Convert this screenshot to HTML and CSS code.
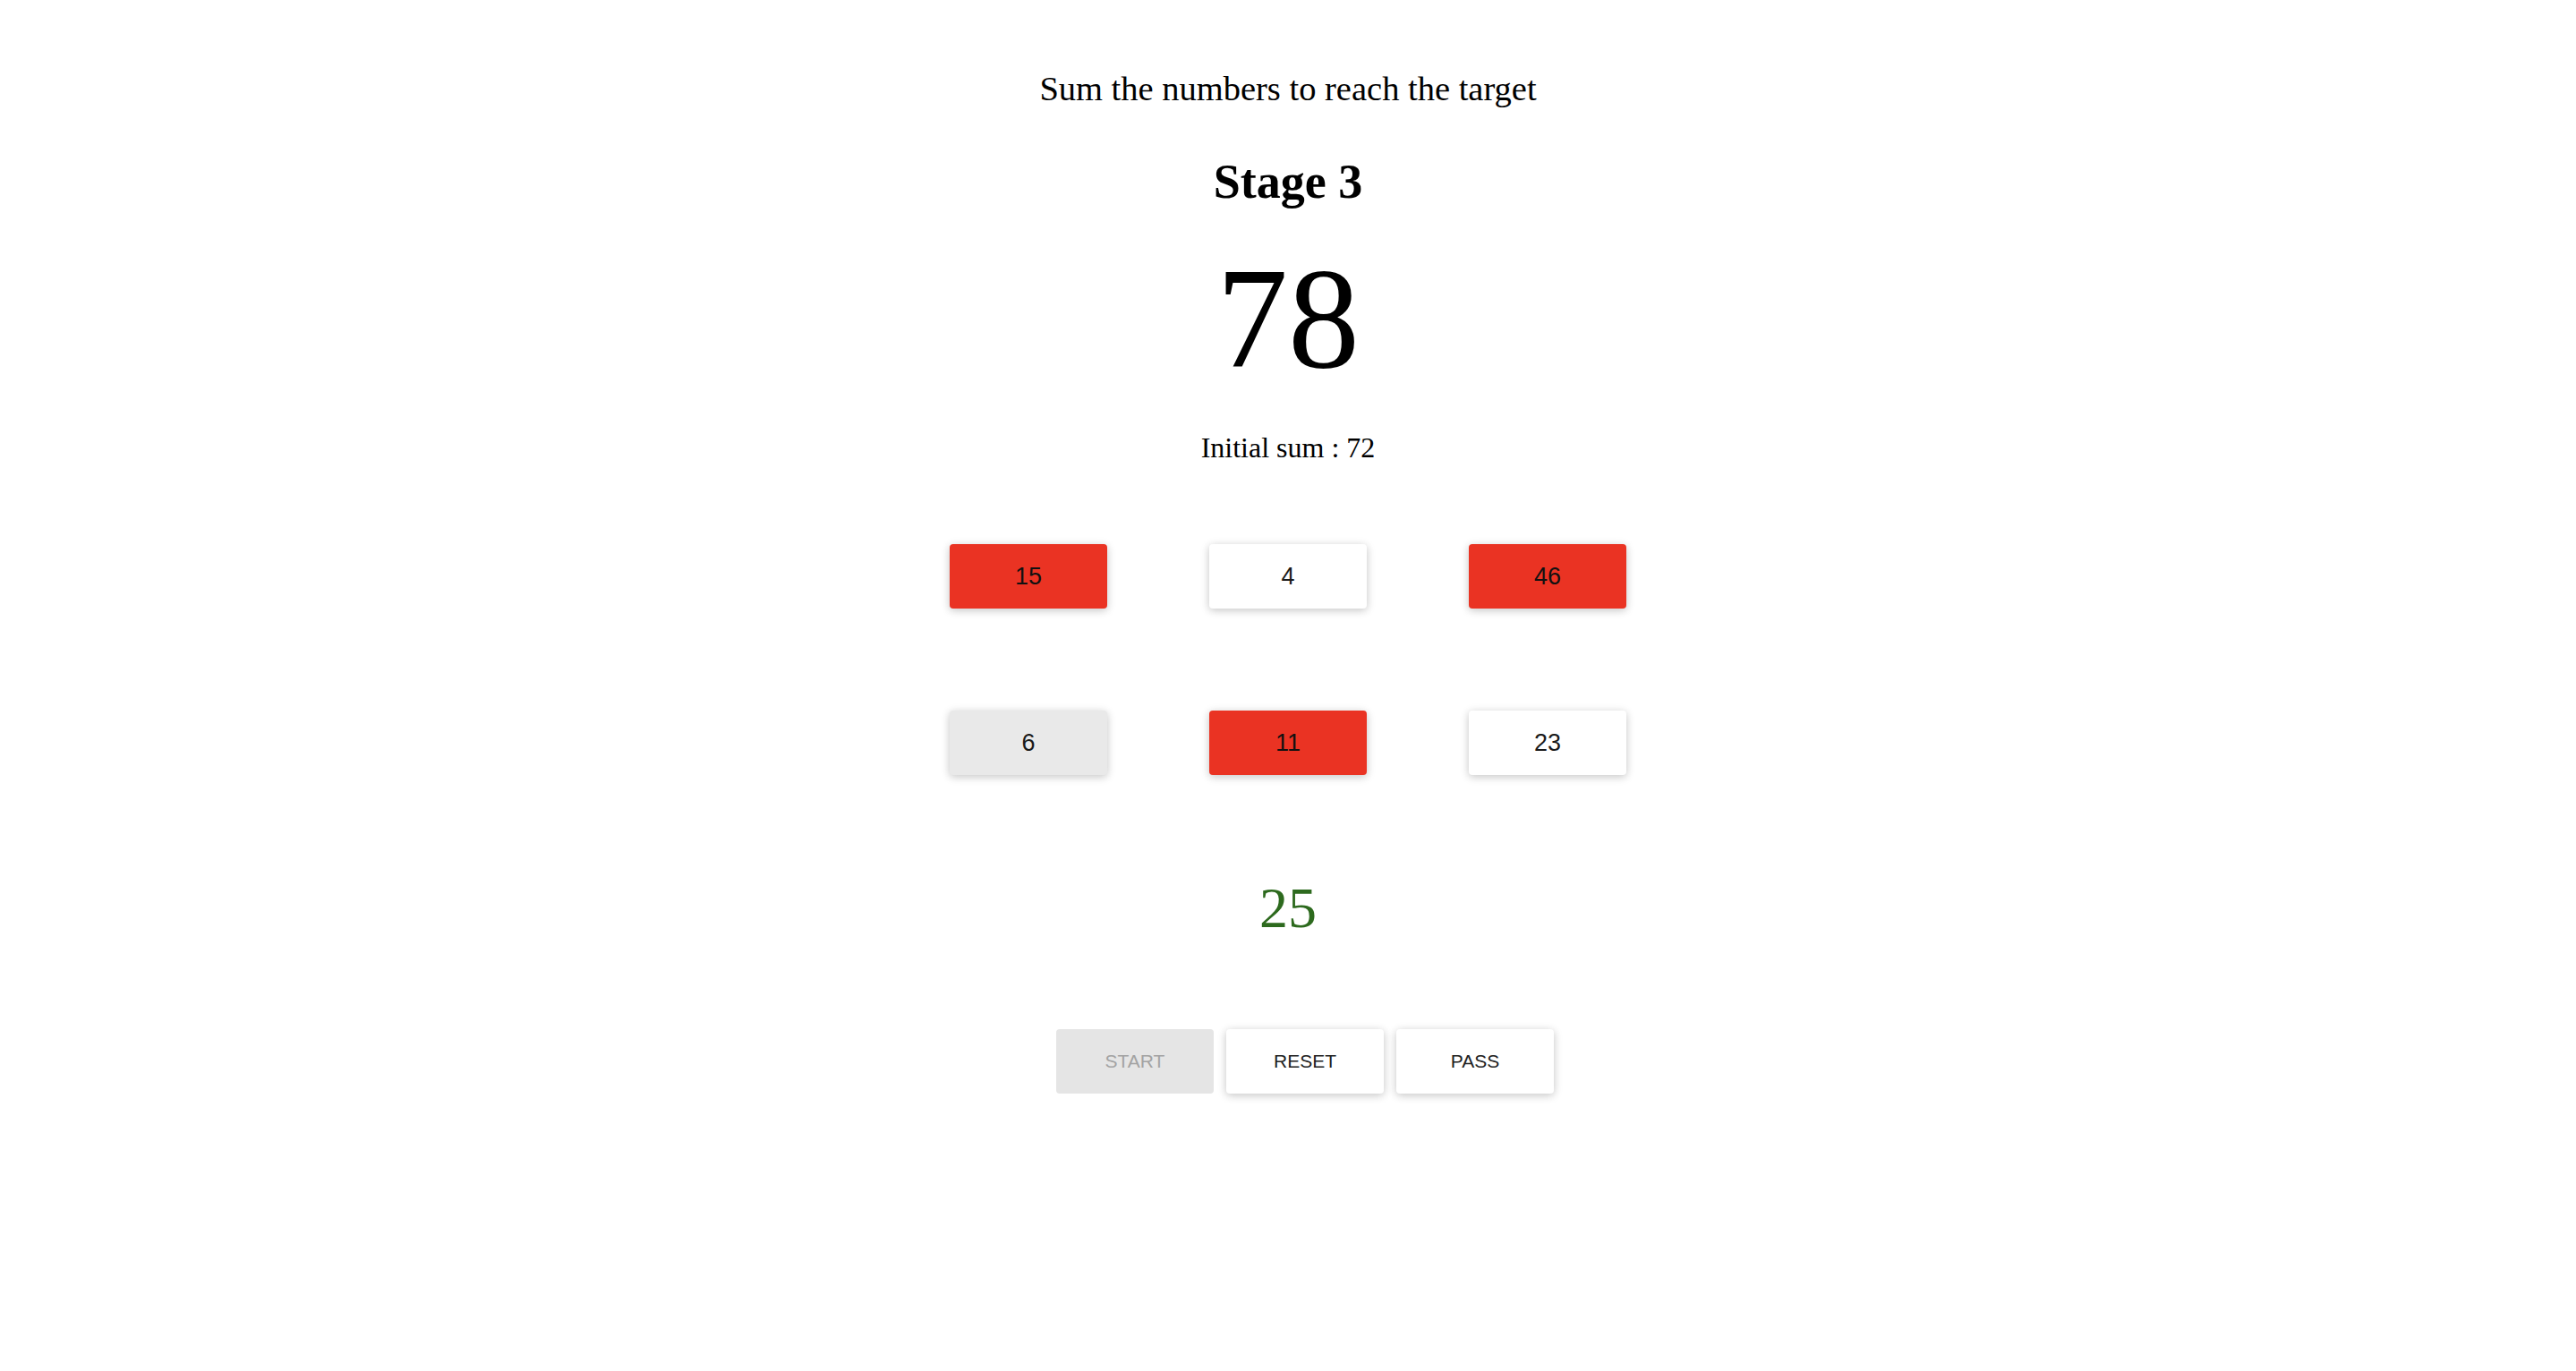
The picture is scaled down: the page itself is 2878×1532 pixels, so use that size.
FILE: index.html
```html
<!DOCTYPE html>
<html lang="en">
<head>
<meta charset="utf-8">
<title>Sum game</title>
<link rel="stylesheet" href="styles.css">
</head>
<body>
<main class="game">
  <p class="instructions">Sum the numbers to reach the target</p>
  <h2 class="stage">Stage 3</h2>
  <div class="target">78</div>
  <p class="initial">Initial sum : 72</p>
  <div class="grid">
    <button class="num num-red">15</button>
    <button class="num">4</button>
    <button class="num num-red">46</button>
    <button class="num num-grey">6</button>
    <button class="num num-red">11</button>
    <button class="num">23</button>
  </div>
  <div class="current">25</div>
  <div class="controls">
    <button class="ctl ctl-disabled">START</button>
    <button class="ctl">RESET</button>
    <button class="ctl">PASS</button>
  </div>
</main>
</body>
</html>
```
FILE: styles.css
```css
html, body {
  margin: 0;
  padding: 0;
  background: #ffffff;
}
body {
  font-family: "Liberation Serif", "Times New Roman", serif;
  color: #000;
}
.game {
  display: flex;
  flex-direction: column;
  align-items: center;
  padding-top: 76px;
  padding-bottom: 40px;
}
.instructions {
  margin: 0;
  font-size: 38.5px;
  line-height: 46px;
}
.stage {
  margin: 50px 0 0;
  font-size: 54px;
  line-height: 62px;
  font-weight: bold;
}
.target {
  margin-top: 42px;
  font-size: 160px;
  line-height: 160px;
}
.initial {
  margin: 44px 0 0;
  font-size: 32px;
  line-height: 40px;
}
.grid {
  margin-top: 88px;
  display: grid;
  grid-template-columns: repeat(3, 176px);
  grid-auto-rows: 72px;
  column-gap: 114px;
  row-gap: 114px;
}
.num {
  border: 0;
  border-radius: 4px;
  background: #ffffff;
  font-family: "Liberation Sans", Arial, sans-serif;
  font-size: 27px;
  color: #1a1a1a;
  box-shadow: 0 2px 12px rgba(0,0,0,0.12), 0 2px 8px rgba(0,0,0,0.12);
  padding: 0;
}
.num-red { background: #ea3323; color: #111; }
.num-grey { background: #e9e9e9; }
.current {
  margin-top: 113px;
  font-size: 64px;
  line-height: 72px;
  color: #2d6a1e;
}
.controls {
  margin-top: 99px;
  display: flex;
  gap: 14px;
  padding-left: 38px;
}
.ctl {
  width: 176px;
  height: 72px;
  border: 0;
  border-radius: 4px;
  background: #ffffff;
  font-family: "Liberation Sans", Arial, sans-serif;
  font-size: 21px;
  color: #222;
  padding: 0;
  box-shadow: 0 2px 12px rgba(0,0,0,0.12), 0 2px 8px rgba(0,0,0,0.12);
}
.ctl-disabled {
  background: #e5e5e5;
  color: #a3a3a3;
  box-shadow: none;
}
```
